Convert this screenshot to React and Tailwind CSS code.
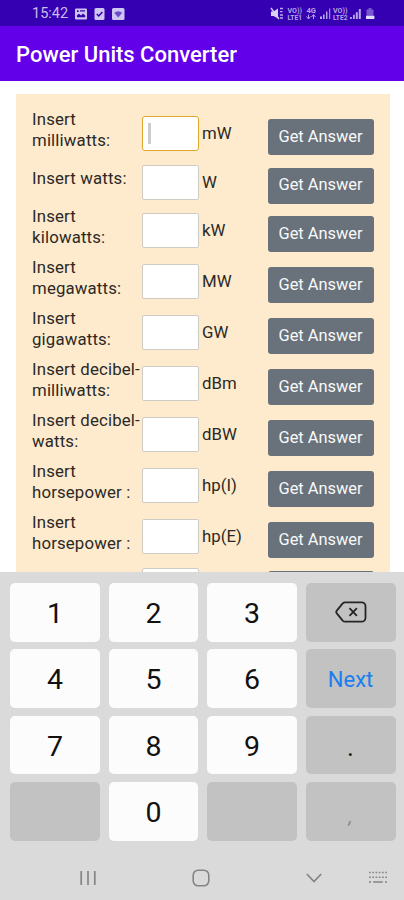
import React from 'react';

const rows = [
  { id: 'mw', label: ['Insert', 'milliwatts:'], unit: 'mW', focused: true },
  { id: 'w', label: ['Insert watts:'], unit: 'W' },
  { id: 'kw', label: ['Insert', 'kilowatts:'], unit: 'kW' },
  { id: 'megaw', label: ['Insert', 'megawatts:'], unit: 'MW' },
  { id: 'gw', label: ['Insert', 'gigawatts:'], unit: 'GW' },
  { id: 'dbm', label: ['Insert decibel-', 'milliwatts:'], unit: 'dBm' },
  { id: 'dbw', label: ['Insert decibel-', 'watts:'], unit: 'dBW' },
  { id: 'hpi', label: ['Insert', 'horsepower :'], unit: 'hp(I)' },
  { id: 'hpe', label: ['Insert', 'horsepower :'], unit: 'hp(E)' },
  { id: 'last', label: [], unit: '' },
];

const keys = [
  { label: '1' }, { label: '2' }, { label: '3' }, { icon: 'backspace', dark: true },
  { label: '4' }, { label: '5' }, { label: '6' }, { label: 'Next', dark: true },
  { label: '7' }, { label: '8' }, { label: '9' }, { label: '.', dark: true },
  { dark: true }, { label: '0' }, { dark: true }, { label: ',', dark: true },
];

const StatusBar = () => (
  <div className="h-[26px] shrink-0 bg-[#3500b1] flex items-center justify-between pl-8 pr-[28px] pt-[1px] text-[#c9bdf0]">
    <div className="flex items-center gap-[7px]">
      <span className="text-[14.5px] leading-none w-[36px] pt-[1px] whitespace-nowrap">15:42</span>
      <svg width="12" height="12" viewBox="0 0 12 12">
        <rect x="0" y="0.5" width="12" height="11" rx="1.2" fill="#cfc5f2" />
        <path d="M2 9.2V7.2l2-1.4 2 1.6 2-2 2.2 2v1.8z" fill="#3500b1" />
        <path d="M2 2.3h1.6v1.6H2zM5 2.3h5v1.3H5z" fill="#3500b1" />
      </svg>
      <svg width="11" height="12" viewBox="0 0 11 12">
        <rect x="0.5" y="0" width="10" height="12" rx="1.5" fill="#cfc5f2" />
        <path d="M2.8 6l2 2 3.6-4" stroke="#3500b1" strokeWidth="1.5" fill="none" />
      </svg>
      <svg width="13" height="12" viewBox="0 0 13 12">
        <rect x="0" y="0" width="12.5" height="12" rx="1.5" fill="#cfc5f2" />
        <path d="M2.2 4.8q4-3.2 8 0L6.2 9.6z" fill="#6d4bc8" />
      </svg>
    </div>
    <svg width="106" height="14" viewBox="0 0 106 14" fill="#b9abea" stroke="none">
      {/* muted speaker */}
      <path d="M1 4.5h2.5L8 1.5v10L3.5 9H1z" fill="#d8d0f5" />
      <path d="M1 1l8 11" stroke="#d8d0f5" strokeWidth="1.3" />
      <path d="M10 1.5h3M10 4.6h2.5M10 8h3M10 11h3" stroke="#b9abea" strokeWidth="1.3" />
      <g fontFamily="Roboto, sans-serif" fontWeight="700" fontSize="6.6" fill="#b3a4e8">
        <text x="17.5" y="6" textLength="14.5" lengthAdjust="spacingAndGlyphs">VO))</text>
        <text x="17.5" y="12.8" textLength="14.5" lengthAdjust="spacingAndGlyphs">LTE1</text>
        <text x="36.5" y="6" textLength="9.5" lengthAdjust="spacingAndGlyphs">4G</text>
        <text x="63" y="6" textLength="14.5" lengthAdjust="spacingAndGlyphs">VO))</text>
        <text x="63" y="12.8" textLength="14.5" lengthAdjust="spacingAndGlyphs">LTE2</text>
      </g>
      <path d="M38.5 7.5v4m-2-2l2 2.5 2-2.5M43.5 12V8m-2 2l2-2.5 2 2.5" stroke="#b3a4e8" fill="none" />
      <path d="M50 9.5h2V12h-2zM53 7.5h1.6V12H53zM56 4.5h1.4V12H56zM59.2 1.5h1V12h-1z" />
      <path d="M80 10h1.8v2H80zM83 7.8h1.8V12H83zM85.8 5.2h2V12h-2zM88.8 2h2v10h-2z" />
      {/* battery */}
      <path d="M98.5 1h3v1.4h2V9h-7V2.4h2z" fill="#7658cf" />
      <path d="M96 8.8h8.4V12H96z" fill="#e3dcfa" />
    </svg>
  </div>
);

const ConverterRow = ({ label, unit, focused }) => (
  <div className={`flex items-center shrink-0 ${label.length > 1 ? 'h-[51px]' : 'h-[46px]'}`}>
    <label className="w-[110px] shrink-0 pb-[7px] text-[16.8px] leading-[20.8px] tracking-[0.16px] whitespace-nowrap">
      {label.map((line) => (
        <span key={line} className="block">{line}</span>
      ))}
    </label>
    <div
      className={`w-[57px] h-[35px] shrink-0 bg-white flex items-center pl-[5px] ${
        focused ? 'border-[1.5px] border-[#dfa72f] rounded-[3px]' : 'border border-[#cfccc6] rounded-[2px]'
      }`}
    >
      {focused && <span className="w-[3px] h-[21px] bg-[#cdcdcd]" />}
    </div>
    <span className="w-[68.5px] shrink-0 pl-[3px] pb-[1px] text-[16.8px] leading-5">{unit}</span>
    <button className="w-[106px] h-[36px] mt-[7px] shrink-0 rounded-[3px] bg-[#69727a] text-[#f8f9fa] text-[16.4px] leading-none whitespace-nowrap">
      {unit && 'Get Answer'}
    </button>
  </div>
);

const BackspaceIcon = () => (
  <svg width="32" height="22" viewBox="0 0 32 22" fill="none" stroke="#252525" strokeWidth="1.8" strokeLinejoin="round">
    <path d="M10 1.3h16.5a4 4 0 0 1 4 4v11.4a4 4 0 0 1-4 4H10c-1 0-1.6-.4-2.3-1.1L1.8 12.4c-.8-1-.8-1.8 0-2.8l5.9-7.2c.7-.7 1.3-1.1 2.3-1.1z" />
    <path d="M14.5 7.2l7.4 7.6M21.9 7.2l-7.4 7.6" />
  </svg>
);

const keyText = (label) => {
  if (label === 'Next') return 'text-[22px] text-[#1b7df0] pt-[3px]';
  if (label === ',') return 'text-[20px] text-[#8a8a8a] italic pt-[10px]';
  if (label === '.') return 'text-[26px] text-[#111] pt-[4px]';
  return 'text-[28.5px] text-[#111] pt-[4px]';
};

const Key = ({ label, icon, dark }) => (
  <button
    className={`h-[58.6px] rounded-[5px] flex items-center justify-center leading-none ${
      dark ? 'bg-[#c2c2c2]' : 'bg-[#fcfcfc]'
    } ${icon ? '' : keyText(label)}`}
  >
    {icon === 'backspace' ? <BackspaceIcon /> : label}
  </button>
);

const NavBar = () => (
  <div className="flex-1 flex items-center text-[#858585] pl-[79px] pt-[15px]">
    <svg width="18" height="16" viewBox="0 0 18 16" stroke="currentColor" strokeWidth="1.7">
      <path d="M2.2 1v14M9 1v14M15.8 1v14" />
    </svg>
    <svg className="ml-[95px]" width="18" height="18" viewBox="0 0 18 18" fill="none" stroke="currentColor" strokeWidth="1.6">
      <rect x="1.2" y="1.2" width="15.6" height="15.6" rx="5" />
    </svg>
    <svg className="ml-[95px]" width="18" height="12" viewBox="0 0 18 12" fill="none" stroke="currentColor" strokeWidth="1.7">
      <path d="M1.8 2L9 9.5 16.2 2" />
    </svg>
    <svg className="ml-[45px]" width="20" height="13" viewBox="0 0 20 13" stroke="currentColor" strokeWidth="1.6">
      <path d="M1 1.5h18M1 6.2h18" strokeDasharray="1.7 1.56" />
      <path d="M1 11h2M5.2 11h9.6M17 11h2" />
    </svg>
  </div>
);

const App = () => (
  <div className="w-full h-[900px] flex flex-col overflow-hidden bg-white font-['Roboto',sans-serif] text-[#2b2926]">
    <StatusBar />

    <header className="h-[55px] shrink-0 bg-[#6200ea] flex items-center pl-4 pt-[3px]">
      <h1 className="text-[22px] leading-none font-medium text-white whitespace-nowrap">Power Units Converter</h1>
    </header>

    {/* Converter form, cut off by the keyboard */}
    <main className="h-[491px] shrink-0 overflow-hidden pt-[13px] pl-4 pr-[14.5px]">
      <div className="bg-[#feebcd] h-[600px] pl-4 pt-[14px]">
        {rows.map((row) => (
          <ConverterRow key={row.id} {...row} />
        ))}
      </div>
    </main>

    {/* Keyboard */}
    <section className="flex-1 bg-[#dadada] flex flex-col">
      <div className="grid grid-cols-4 gap-x-[8.6px] gap-y-[7.8px] pt-[11px] pl-[10px] pr-[8.5px]">
        {keys.map((key, i) => (
          <Key key={i} {...key} />
        ))}
      </div>
      <NavBar />
    </section>
  </div>
);

export default App;
